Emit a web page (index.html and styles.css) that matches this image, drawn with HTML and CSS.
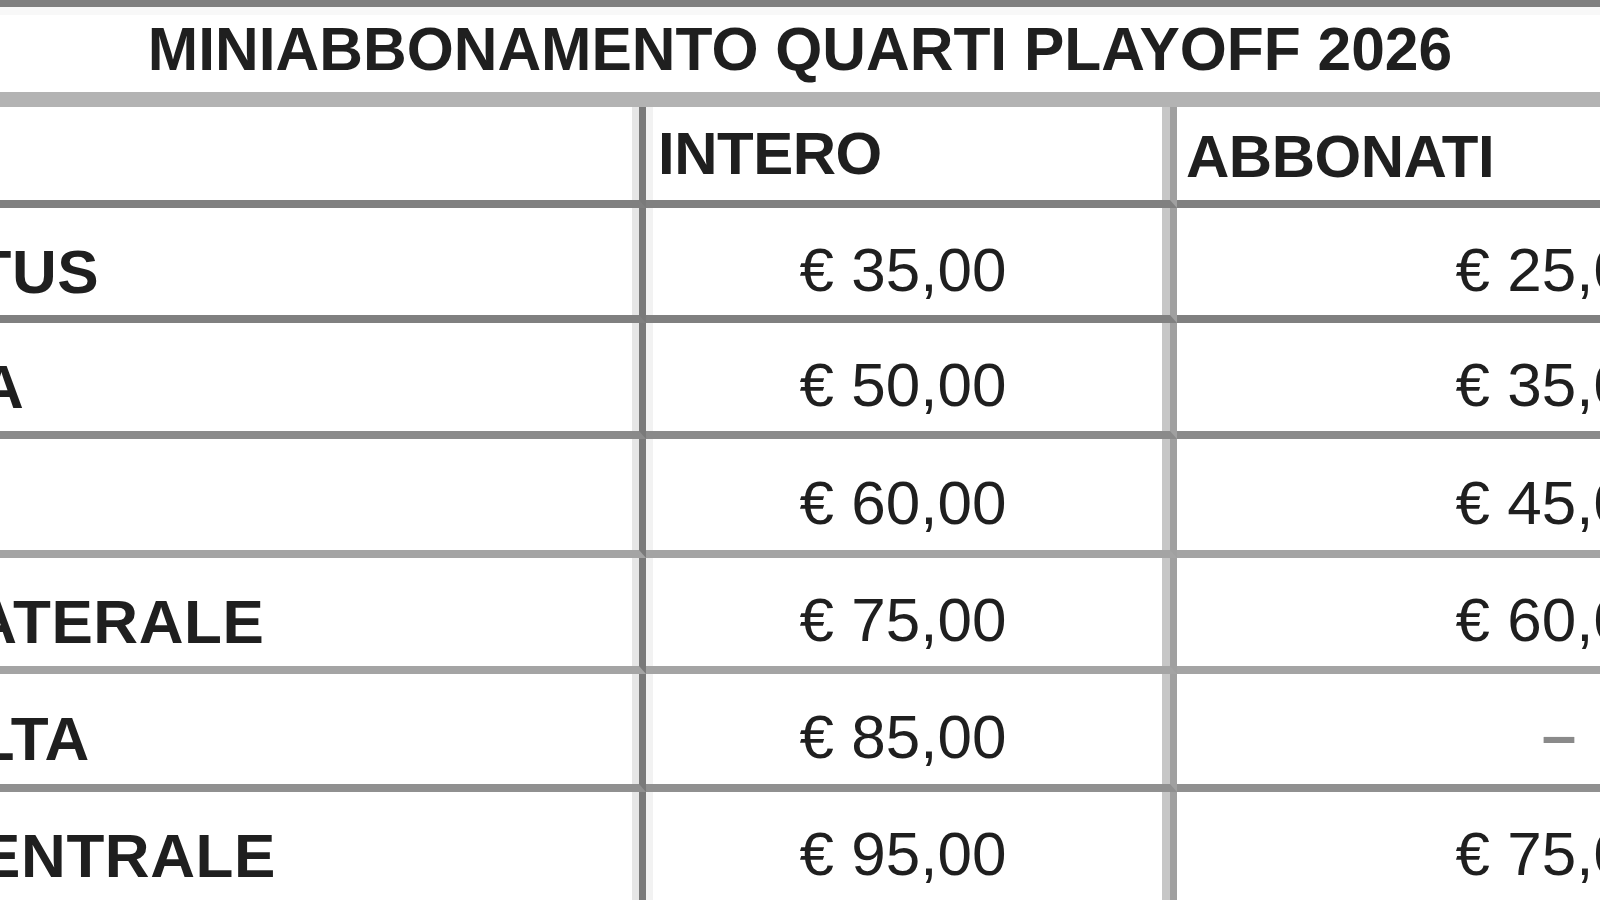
FILE: index.html
```html
<!DOCTYPE html>
<html lang="it">
<head>
<meta charset="utf-8">
<title>Miniabbonamento Quarti Playoff 2026</title>
<link rel="stylesheet" href="styles.css">
</head>
<body>
<div class="viewport">
  <div class="sheet">
    <div class="title">MINIABBONAMENTO QUARTI PLAYOFF 2026</div>

    <div class="cell c1 head"></div>
    <div class="cell c2 head"><span class="htext">INTERO</span></div>
    <div class="cell c3 head"><span class="htext">ABBONATI</span></div>

    <div class="cell c1 label r1">CURVA VIRTUS</div>
    <div class="cell c2 num r1">€ 35,00</div>
    <div class="cell c3 num r1">€ 25,00</div>

    <div class="cell c1 label r2">CURVA ALTA</div>
    <div class="cell c2 num r2">€ 50,00</div>
    <div class="cell c3 num r2">€ 35,00</div>

    <div class="cell c1 label r3">GALLERIA</div>
    <div class="cell c2 num r3">€ 60,00</div>
    <div class="cell c3 num r3">€ 45,00</div>

    <div class="cell c1 label r4">TRIBUNA LATERALE</div>
    <div class="cell c2 num r4">€ 75,00</div>
    <div class="cell c3 num r4">€ 60,00</div>

    <div class="cell c1 label r5">TRIBUNA ALTA</div>
    <div class="cell c2 num r5">€ 85,00</div>
    <div class="cell c3 num r5"><span class="dash">–</span></div>

    <div class="cell c1 label r6">TRIBUNA CENTRALE</div>
    <div class="cell c2 num r6">€ 95,00</div>
    <div class="cell c3 num r6">€ 75,00</div>
  </div>
</div>
</body>
</html>
```

FILE: styles.css
```css
html, body {
  margin: 0;
  padding: 0;
  background: #ffffff;
}

.viewport {
  width: 1600px;
  height: 900px;
  overflow: hidden;
  background: #ffffff;
}

.sheet {
  display: grid;
  grid-template-columns: 1021px 531px 764px;
  grid-template-rows: 107px 101px 115px 116px 119px 116px 118px 116px;
  width: 2316px;
  margin-left: -375px;
  font-family: "Liberation Sans", Arial, sans-serif;
  color: #1f1f1f;
}

.title {
  grid-column: 1 / -1;
  box-sizing: border-box;
  border-top: 7px solid #808080;
  border-bottom: 15px solid #b3b3b3;
  box-shadow: inset 0 8px 0 #f8f8f8;
  display: flex;
  align-items: center;
  justify-content: center;
  padding-left: 34px;
  font-size: 60.5px;
  font-weight: bold;
  line-height: 1;
}

.cell {
  box-sizing: border-box;
  display: flex;
  align-items: center;
  border-bottom: 8px solid #858585;
  white-space: nowrap;
  line-height: 1;
}

.c1 {
  border-right: 7px solid #7a7a7a;
  padding-left: 10px;
  box-shadow: inset -7px 0 0 #e6e6e6;
}

.c2 {
  border-right: 7px solid #a0a0a0;
  justify-content: center;
  padding-right: 10px;
  box-shadow: inset -8px 0 0 #c6c6c6, inset 7px 0 0 #f2f2f2;
}

.c3 {
  justify-content: center;
}

.head {
  border-bottom-color: #808080;
  justify-content: flex-start;
  padding-left: 12px;
  padding-right: 0;
}

.c1.head {
  padding-left: 0;
}

.htext {
  font-size: 60px;
  font-weight: bold;
  letter-spacing: -0.5px;
}

.c3.head .htext {
  position: relative;
  top: 3px;
  left: -3px;
}

.label {
  font-size: 62px;
  font-weight: bold;
  padding-top: 20px;
  letter-spacing: 0.6px;
}

.num {
  font-size: 62px;
  font-weight: normal;
  padding-top: 16px;
}

.dash {
  font-weight: bold;
  font-size: 62px;
  color: #8a8a8a;
  position: relative;
  top: -2px;
}

.r1 { border-bottom-color: #808080; }
.r2 { border-bottom-color: #8a8a8a; }
.r3 { border-bottom-color: #a4a4a4; }
.r4 { border-bottom-color: #a4a4a4; }
.r5 { border-bottom-color: #909090; }
.r6 { border-bottom-color: #888888; }
```
